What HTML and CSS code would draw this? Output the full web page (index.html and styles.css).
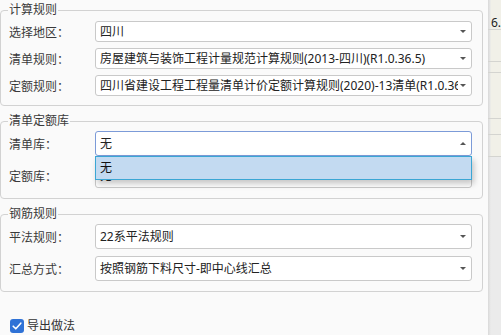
FILE: index.html
```html
<!DOCTYPE html>
<html lang="zh-CN">
<head>
<meta charset="utf-8">
<title>规则设置</title>
<link rel="stylesheet" href="styles.css">
</head>
<body>
<div class="screen">
  <div class="panel">
    <fieldset class="group group-calc">
      <legend>计算规则</legend>
      <div class="rows">
        <span class="label">选择地区：</span>
        <div class="select"><span class="value">四川</span><span class="arrow"></span></div>
        <span class="label">清单规则：</span>
        <div class="select"><span class="value">房屋建筑与装饰工程计量规范计算规则(2013-四川)(R1.0.36.5)</span><span class="arrow"></span></div>
        <span class="label">定额规则：</span>
        <div class="select"><span class="value">四川省建设工程工程量清单计价定额计算规则(2020)-13清单(R1.0.36.5)</span><span class="arrow"></span></div>
      </div>
    </fieldset>

    <fieldset class="group group-lib">
      <legend>清单定额库</legend>
      <div class="rows tall">
        <span class="label">清单库：</span>
        <div class="select focused">
          <span class="value">无</span><span class="arrow up"></span>
          <div class="popup"><span class="option">无</span></div>
        </div>
        <span class="label">定额库：</span>
        <div class="select"><span class="value">无</span><span class="arrow"></span></div>
      </div>
    </fieldset>

    <fieldset class="group group-rebar">
      <legend>钢筋规则</legend>
      <div class="rows tall">
        <span class="label">平法规则：</span>
        <div class="select"><span class="value">22系平法规则</span><span class="arrow"></span></div>
        <span class="label">汇总方式：</span>
        <div class="select"><span class="value">按照钢筋下料尺寸-即中心线汇总</span><span class="arrow"></span></div>
      </div>
    </fieldset>

    <label class="check">
      <span class="box"><svg width="14" height="14" viewBox="0 0 14 14"><polyline points="3.2,7.2 5.8,9.8 10.8,4.2" fill="none" stroke="#fff" stroke-width="1.6" stroke-linecap="round" stroke-linejoin="round"/></svg></span>
      <span class="check-text">导出做法</span>
    </label>
  </div>

  <div class="side">
    <div class="side-row r1"><span class="side-text">6.</span></div>
    <div class="side-row r2"></div>
    <div class="side-row r3"></div>
    <div class="side-row r4"></div>
    <div class="side-row r5"></div>
    <div class="side-row r6"></div>
    <div class="side-rest"></div>
  </div>
</div>
</body>
</html>
```

FILE: styles.css
```css
* { box-sizing: border-box; }
html, body { margin: 0; padding: 0; }
body {
  width: 501px;
  height: 335px;
  overflow: hidden;
  font-family: "Noto Sans", "Noto Sans CJK SC", sans-serif;
  font-size: 12px;
  color: #333;
  background: #f9f9f9;
}
.screen {
  display: flex;
  height: 335px;
}
.panel {
  width: 488px;
  flex: none;
  padding-right: 5px;
  background: #fafafa;
  display: flex;
  flex-direction: column;
}
.group {
  margin: 7px 0 0 0;
  min-width: 0;
  border: 1px solid #d2d2d2;
  border-radius: 4px;
  padding: 2px 10px 10px 8px;
}
.group-calc {
  margin-top: 2px;
  padding-top: 3px;
  padding-bottom: 9px;
}
.group legend {
  padding: 0 1px;
  margin-left: -1px;
  line-height: 16px;
  color: #3a3a3a;
}
.rows {
  display: grid;
  grid-template-columns: 86px 1fr;
  grid-auto-rows: 21px;
  row-gap: 6px;
}
.rows.tall {
  grid-auto-rows: 25px;
  row-gap: 7px;
}
.label {
  align-self: center;
  line-height: 16px;
  padding-top: 2px;
  color: #3a3a3a;
  white-space: nowrap;
}
.select {
  position: relative;
  display: flex;
  align-items: center;
  min-width: 0;
  background: #fff;
  border: 1px solid #c9c9c9;
  border-radius: 3px;
}
.value {
  flex: 1;
  min-width: 0;
  overflow: hidden;
  white-space: nowrap;
  padding-left: 4px;
  line-height: 16px;
  color: #222;
}
.arrow {
  flex: none;
  width: 0;
  height: 0;
  margin: 0 5px 0 2px;
  border-left: 3px solid transparent;
  border-right: 3px solid transparent;
  border-top: 3px solid #555;
}
.arrow.up {
  border-top: 0;
  border-bottom: 3px solid #555;
}
.select.focused {
  border-color: #7c9bd8;
}
.popup {
  position: absolute;
  left: -1px;
  right: -1px;
  top: calc(100% + 1px);
  height: 24px;
  display: flex;
  align-items: center;
  background: #c3daf1;
  border: 1px solid #3ba6d4;
  box-shadow: 2px 4px 6px rgba(0, 0, 0, 0.22);
  z-index: 5;
}
.option {
  padding-left: 4px;
  line-height: 16px;
  color: #111;
}
.check {
  display: flex;
  align-items: center;
  margin-top: 26px;
  padding-left: 10px;
  line-height: 16px;
}
.box {
  width: 14px;
  height: 14px;
  border-radius: 3px;
  background: #2f72d6;
  display: flex;
}
.check-text {
  margin-left: 3px;
  color: #333;
}
.side {
  flex: 1;
  display: flex;
  flex-direction: column;
  background: linear-gradient(to right, #d8d8d8 0, #e6e6e6 2px, transparent 3px), #f1f0e8;
}
.side-row {
  border-bottom: 1px solid #d4d4d0;
}
.r1 { height: 30px; padding: 14px 0 0 3px; }
.r2 { height: 32px; }
.r3 { height: 11px; }
.r4 { height: 46px; }
.r5 { height: 16px; }
.r6 { height: 22px; }
.side-rest {
  flex: 1;
  background: linear-gradient(to right, #d8d8d8 0, #e6e6e6 2px, #ebebeb 3px);
}
.side-text {
  font-size: 12px;
  line-height: 12px;
  color: #222;
}
```
